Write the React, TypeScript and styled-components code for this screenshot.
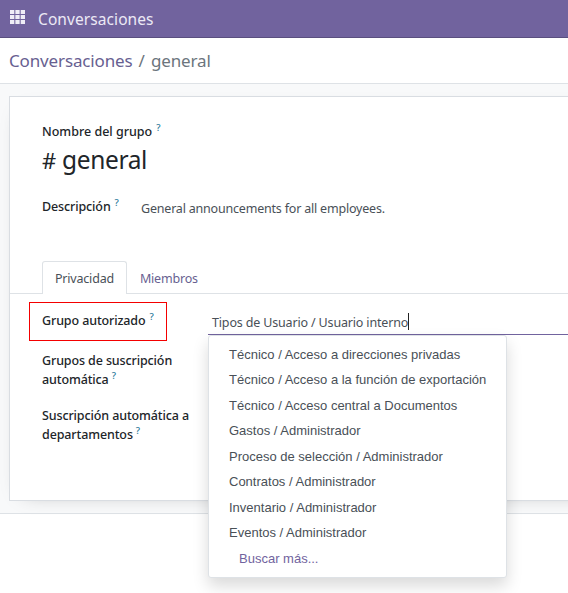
import React from "react";
import styled, { createGlobalStyle } from "styled-components";

const GlobalStyle = createGlobalStyle`
  * { box-sizing: border-box; }
  body {
    margin: 0;
    background: #fff;
    color: #495057;
    font-family: "Noto Sans", "Open Sans", sans-serif;
    font-size: 12.5px;
    overflow: hidden;
  }
`;

const Page = styled.div`
  height: 593px;
  overflow: hidden;
`;

const Navbar = styled.header`
  display: flex;
  align-items: center;
  height: 38px;
  padding: 0 0 0 10px;
  background: #71639e;
  border-bottom: 1px solid #5a4f7f;
`;

const AppsIcon = styled.svg`
  display: block;
  margin: 0 13px 4px 0;
`;

const Brand = styled.span`
  font-size: 15.5px;
  line-height: 22px;
  letter-spacing: 0.08px;
  color: #ece9f5;
`;

const ControlPanel = styled.nav`
  display: flex;
  height: 46px;
  padding: 11px 0 0 9px;
  border-bottom: 1px solid #dee2e6;
  font-size: 17px;
  line-height: 24px;
`;

const Crumb = styled.span<{ $current?: boolean }>`
  color: ${(p) => (p.$current ? "#6c757d" : "#685f91")};
  letter-spacing: -0.14px;
`;

const Separator = styled.span`
  margin: 0 6px 0 6px;
  color: #6c757d;
`;

const Content = styled.main`
  height: 430px;
  padding: 12px 0 0 9px;
  background: #f8f9fa;
  border-bottom: 1px solid #dee2e6;
`;

const Sheet = styled.section`
  width: 640px;
  height: 405px;
  padding-top: 25px;
  background: #fff;
  border: 1px solid #d9dde2;
  box-shadow: 0 5px 20px -15px rgba(0, 0, 0, 0.4);
`;

const Help = styled.sup`
  display: inline-block;
  height: 9px;
  margin-left: 4px;
  font-size: 9.5px;
  font-weight: 500;
  line-height: 9px;
  vertical-align: 5px;
  color: #2b7a9b;
`;

const Label = styled.label<{ $tight?: boolean; $wrapped?: boolean }>`
  display: block;
  font-size: 12.5px;
  font-weight: 500;
  line-height: 19px;
  letter-spacing: ${(p) => (p.$tight ? "-0.12px" : "0")};
  color: #212529;
  white-space: pre-line;

  ${Help} {
    margin-left: ${(p) => (p.$wrapped ? 3 : 4)}px;
  }
`;

const Heading = styled.div`
  padding-left: 32px;
`;

const ChannelName = styled.div`
  display: flex;
  align-items: baseline;
  height: 34px;
  margin-top: 1px;
  color: #212529;
  line-height: 36px;
`;

const Hash = styled.span`
  width: 20px;
  font-size: 22px;
  font-weight: 450;
`;

const Name = styled.span`
  font-size: 24.5px;
  letter-spacing: -0.35px;
`;

const Description = styled.div`
  display: flex;
  height: 64px;
  padding: 21px 0 0 32px;
`;

const DescriptionLabel = styled.div`
  width: 99px;
`;

const DescriptionText = styled.span`
  padding-top: 2px;
  line-height: 19px;
  letter-spacing: -0.2px;
`;

const TabBar = styled.div`
  display: flex;
  height: 33px;
  margin-top: 21px;
  padding-left: 32px;
  border-bottom: 1px solid #dee2e6;
`;

const Tab = styled.button<{ $active?: boolean }>`
  height: 33px;
  padding: 1px 12px 0;
  border: 1px solid ${(p) => (p.$active ? "#dee2e6" : "transparent")};
  border-bottom: 0;
  border-radius: 3px 3px 0 0;
  background: ${(p) => (p.$active ? "#fff" : "transparent")};
  color: ${(p) => (p.$active ? "#495057" : "#685f91")};
  font: inherit;
  letter-spacing: -0.2px;
`;

const Fields = styled.div`
  display: grid;
  grid-template-columns: 179px 1fr;
  padding: 8px 0 0 19px;
`;

const Labels = styled.div`
  display: flex;
  flex-direction: column;
`;

const Highlight = styled.div`
  width: 138px;
  height: 39px;
  padding: 8px 0 0 12px;
  border: 1px solid #f40000;
`;

const FieldLabel = styled.div<{ $top: number }>`
  padding: ${(p) => p.$top}px 0 0 13px;
`;

const Combo = styled.div`
  position: relative;
  height: 33px;
  padding: 11px 0 0 4px;
  border-bottom: 1px solid #71639e;
  line-height: 19px;
  letter-spacing: -0.16px;
`;

const Caret = styled.i`
  display: inline-block;
  width: 1px;
  height: 17px;
  background: #222;
  vertical-align: -3px;
`;

const Menu = styled.ul`
  position: absolute;
  top: 33px;
  left: 0;
  z-index: 2;
  width: 299px;
  height: 243px;
  margin: 0;
  padding: 5.8px 0;
  list-style: none;
  background: #fff;
  border: 1px solid #dee2e6;
  border-radius: 3px;
  box-shadow: 0 8px 16px rgba(0, 0, 0, 0.15);
  font-family: "Liberation Sans", Arial, sans-serif;
  font-size: 13px;
  letter-spacing: 0;
`;

const Option = styled.li<{ $more?: boolean }>`
  height: 25.5px;
  padding-left: ${(p) => (p.$more ? 30 : 20)}px;
  line-height: 25.5px;
  color: ${(p) => (p.$more ? "#71639e" : "#495057")};
  white-space: nowrap;
`;

const options = [
  "Técnico / Acceso a direcciones privadas",
  "Técnico / Acceso a la función de exportación",
  "Técnico / Acceso central a Documentos",
  "Gastos / Administrador",
  "Proceso de selección / Administrador",
  "Contratos / Administrador",
  "Inventario / Administrador",
  "Eventos / Administrador",
];

const cells = [0, 1, 2];

export default function App() {
  return (
    <Page>
      <GlobalStyle />
      <Navbar>
        <AppsIcon width="15" height="14" viewBox="0 0 15 14" fill="#efedf6">
          {cells.map((r) =>
            cells.map((c) => <rect key={`${r}-${c}`} x={c * 5.35} y={r * 5} width="4.3" height="4" />)
          )}
        </AppsIcon>
        <Brand>Conversaciones</Brand>
      </Navbar>
      <ControlPanel>
        <Crumb>Conversaciones</Crumb>
        <Separator>/</Separator>
        <Crumb $current>general</Crumb>
      </ControlPanel>
      <Content>
        <Sheet>
          <Heading>
            <Label>Nombre del grupo<Help>?</Help></Label>
            <ChannelName>
              <Hash>#</Hash>
              <Name>general</Name>
            </ChannelName>
          </Heading>
          <Description>
            <DescriptionLabel>
              <Label $tight>Descripción<Help>?</Help></Label>
            </DescriptionLabel>
            <DescriptionText>General announcements for all employees.</DescriptionText>
          </Description>
          <TabBar>
            <Tab $active>Privacidad</Tab>
            <Tab>Miembros</Tab>
          </TabBar>
          <Fields>
            <Labels>
              <Highlight>
                <Label $tight>Grupo autorizado<Help>?</Help></Label>
              </Highlight>
              <FieldLabel $top={10}>
                <Label $tight $wrapped>{"Grupos de suscripción\nautomática"}<Help>?</Help></Label>
              </FieldLabel>
              <FieldLabel $top={17}>
                <Label $tight $wrapped>{"Suscripción automática a\ndepartamentos"}<Help>?</Help></Label>
              </FieldLabel>
            </Labels>
            <Combo>
              Tipos de Usuario / Usuario interno<Caret />
              <Menu>
                {options.map((o) => (
                  <Option key={o}>{o}</Option>
                ))}
                <Option $more>Buscar más...</Option>
              </Menu>
            </Combo>
          </Fields>
        </Sheet>
      </Content>
    </Page>
  );
}
